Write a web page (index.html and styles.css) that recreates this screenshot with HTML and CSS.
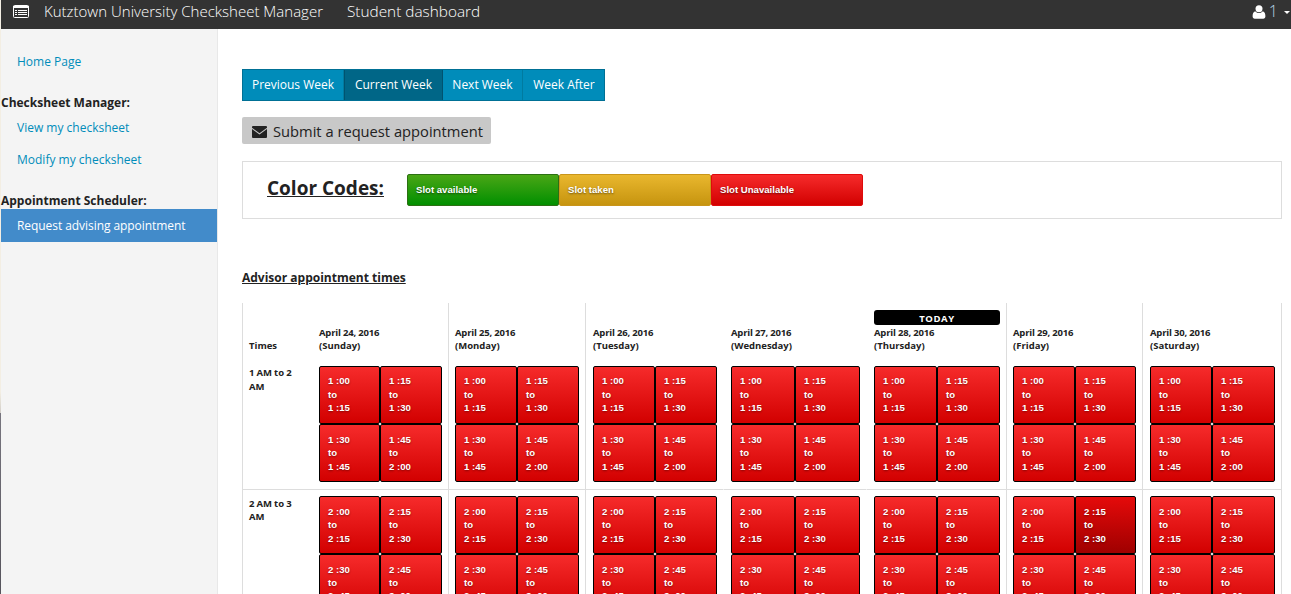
FILE: index.html
```html
<!DOCTYPE html>
<html lang="en">
<head>
<meta charset="utf-8">
<title>Student dashboard</title>
<link rel="stylesheet" href="styles.css">
</head>
<body>
<header class="topbar">
  <svg class="icon-list" width="16" height="13" viewBox="0 0 16 13"><rect x=".5" y=".5" width="15" height="12" rx="1" fill="none" stroke="#fff"/><path d="M0 1h16v2H0z" fill="#fff"/><path d="M2 5.500h2M5 5.500h9M2 7.500h2M5 7.500h9M2 9.500h2M5 9.500h9" stroke="#fff" stroke-width="1"/></svg>
  <span class="brand">Kutztown University Checksheet Manager</span>
  <span class="section">Student dashboard</span>
  <div class="user">
    <svg width="14" height="14" viewBox="0 0 14 14"><circle cx="7" cy="3.7" r="3.5" fill="#fff"/><path d="M3.2 6.2C4.9 8.6 9.100 8.600 10.800 6.200 12.700 6.700 13.400 8.800 13.400 11.200c0 1.600-.8 2.500-2.200 2.500H2.800C1.400 13.700.6 12.800.6 11.200.6 8.800 1.300 6.700 3.200 6.200z" fill="#fff"/></svg>
    <span class="count">1</span>
    <span class="caret"></span>
  </div>
</header>
<div class="page">
  <nav class="sidebar">
    <a class="link">Home Page</a>
    <h2 class="group">Checksheet Manager:</h2>
    <a class="link">View my checksheet</a>
    <a class="link">Modify my checksheet</a>
    <h2 class="group">Appointment Scheduler:</h2>
    <a class="link active">Request advising appointment</a>
  </nav>
  <main class="main">
    <div class="weeks">
      <button class="week w1">Previous Week</button><button class="week w2 current">Current Week</button><button class="week w3">Next Week</button><button class="week w4">Week After</button>
    </div>
    <button class="submit"><svg width="15" height="12" viewBox="0 0 15 12"><path d="M1 0h13q1 0 1 1v.7L7.500 7.200 0 1.700V1q0-1 1-1z" fill="#222"/><path d="M0 3l7.500 5.500L15 3v8q0 1-1 1H1q-1 0-1-1z" fill="#222"/></svg><span>Submit a request appointment</span></button>
    <section class="codes">
      <h1 class="codes-title">Color Codes:</h1>
      <div class="code green">Slot available</div><div class="code gold">Slot taken</div><div class="code red">Slot Unavailable</div>
    </section>
    <h2 class="heading">Advisor appointment times</h2>
    <div class="calendar" id="calendar"></div>
  </main>
</div>
<script src="app.js"></script>
</body>
</html>
```
FILE: styles.css
```css
* { box-sizing: border-box; }
body {
  margin: 0;
  height: 594px;
  padding-left: 1px;
  overflow: hidden;
  font-family: "Open Sans", sans-serif;
  color: #222;
  background: linear-gradient(#f3eee3 0 392px, #d2cec8 413px, #77757e 413px, #55535b 594px) 0 0 / 1px 594px no-repeat #fff;
}
h1, h2 { margin: 0; }
button { font: inherit; margin: 0; padding: 0; }
.topbar {
  display: flex;
  align-items: flex-start;
  height: 29px;
  background: #333;
  color: #fff;
  font-size: 15.35px;
  line-height: 22px;
  font-weight: 300;
  padding-left: 12px;
}
.icon-list { margin: 5px 15px 0 0; }
.brand { width: 279px; font-size: 15.02px; line-height: 23px; white-space: nowrap; }
.section { margin-left: 24px; line-height: 22px; }
.user { display: flex; margin-left: auto; }
.user svg { margin-top: 5px; }
.count { margin: 0 6px 0 3px; font-size: 16px; color: #b9d6e8; }
.caret { width: 6px; height: 3px; margin: 11px 1px 0 0; border: 3px solid transparent; border-top-color: #fff; border-bottom: 0; }
.page { display: flex; height: 565px; }
.sidebar { width: 217px; background: #f4f4f4; border-right: 1px solid #e8e8e8; padding-top: 16px; flex: none; }
.link { display: block; height: 32px; padding-left: 16px; font-size: 12px; line-height: 33px; color: #008cba; }
.group { font-size: 12px; line-height: 17px; }
.sidebar .group { margin-top: 17px; }
.sidebar .link.active { height: 33px; background: #428bca; color: #fff; letter-spacing: -.06px; }
.main { flex: 1; padding: 40px 9px 0 24px; min-width: 0; overflow: hidden; }
.weeks { display: flex; width: 363px; height: 32px; border: 1px solid #007095; }
.week { border: 0; border-right: 1px solid #007ba0; background: #008cba; color: #fff; font-size: 12px; white-space: nowrap; line-height: 30px; }
.w1 { width: 101px; }
.w2 { width: 99px; }
.w3 { width: 80px; }
.w4 { width: 81px; padding-left: 1px; border-right: 0; }
.week.current { background: #006687; border: 1px solid #005370; border-width: 0 1px; }
.submit { display: flex; align-items: center; width: 249px; height: 27px; margin-top: 16px; padding: 1px 0 0 10px; gap: 6px; border: 0; border-radius: 2px; background: #c8c8c8; color: #222; font-size: 14.7px; line-height: 24px; white-space: nowrap; }
.submit svg { margin-top: 2px; }
.codes { display: flex; height: 58px; margin-top: 17px; padding: 12px 0 0 24px; border: 1px solid #ddd; }
.codes-title { width: 140px; font-size: 19px; line-height: 28px; text-decoration: underline; text-decoration-thickness: 1px; white-space: nowrap; }
.code { width: 152px; height: 32px; padding-left: 8px; border: 1px solid; border-radius: 2px; font: bold 9.6px/30px "Liberation Sans", sans-serif; color: #fff; text-shadow: 0 1px 2px rgba(0, 0, 0, .5); }
.green { background: linear-gradient(#4aa616, #018f00); border-color: #2c7013; }
.gold { background: linear-gradient(#e9b72e, #c6940f); border-color: #c9951a; }
.red { background: linear-gradient(#f62b2b, #d20000); border-color: #df0b0b; }
.heading { margin-top: 50px; font-size: 12px; line-height: 17px; text-decoration: underline; }
.calendar {
  display: grid;
  grid-template-columns: 69px 137px 137px 138px 143px 140px 136px 139px;
  grid-template-rows: 56px 131px 131px;
  margin-top: 17px;
  border-left: 1px solid #ddd;
}
.cell { padding: 7px 6px 0 7px; border-right: 1px solid #ddd; border-bottom: 1px solid #ddd; }
.cell.tight { padding-left: 6px; }
.cell.open { border-right-color: transparent; }
.cell.head, .cell.time { font-size: 9.5px; font-weight: 700; line-height: 13px; }
.cell.head { padding-top: 23px; border-bottom: 0; white-space: nowrap; }
.date { letter-spacing: -.2px; }
.cell.time { border-right: 0; padding: 7px 6px 0; line-height: 13.5px; word-spacing: -.4px; }
.cell.corner { padding: 36px 0 0 6px; border-right: 0; }
.cell.today { padding-top: 7px; }
.badge { display: block; height: 15px; margin-bottom: 1px; border-radius: 3px; background: #000; color: #fff; text-align: center; letter-spacing: .6px; line-height: 18px; }
.slots { display: grid; grid-template-columns: 62px 1fr; grid-auto-rows: 58px; }
.day0 .slots { grid-template-columns: 61px 1fr; }
.day3 .slots { grid-template-columns: 64px 1fr; }
.day4 .slots { grid-template-columns: 63px 1fr; }
.slot { height: 58px; padding: 7px 0 0 8px; border: 1px solid #000; border-radius: 2px; background: linear-gradient(#f62b2b, #d20000); color: #fff; font: bold 9.6px/13.6px "Liberation Sans", sans-serif; text-shadow: 0 1px 2px rgba(0, 0, 0, .4); white-space: nowrap; }
.slot:nth-child(n+3), .second .slot { padding-top: 7.6px; }
.second .slot:nth-child(n+3) { padding-top: 8px; line-height: 13px; }
.slot.hover { background: linear-gradient(#e50a0a, #9f0000); }
.cell.second { padding-top: 6px; }
.cell.time.second { padding-top: 7px; line-height: 13px; }
```
FILE: app.js
```js
const days = ['Sunday', 'Monday', 'Tuesday', 'Wednesday', 'Thursday', 'Friday', 'Saturday'];
const calendar = document.getElementById('calendar');

function cellClass(i) {
  return `cell day${i}` + (i === 1 || i === 5 ? ' tight' : '') + (i === 2 || i === 3 ? ' open' : '');
}

let html = '<div class="cell head corner">Times</div>';
days.forEach((day, i) => {
  const today = i === 4;
  html += `<div class="${cellClass(i)} head${today ? ' today' : ''}">${today ? '<span class="badge">TODAY</span>' : ''}<span class="date">April ${24 + i}, 2016</span><br>(${day})</div>`;
});

[1, 2].forEach((hour) => {
  const second = hour === 2 ? ' second' : '';
  const marks = [`${hour} :00`, `${hour} :15`, `${hour} :30`, `${hour} :45`, `${hour + 1} :00`];
  html += `<div class="cell time${second}">${hour} AM to ${hour + 1} AM</div>`;
  days.forEach((day, i) => {
    html += `<div class="${cellClass(i)}${second}"><div class="slots">`;
    for (let q = 0; q < 4; q++) {
      const hover = hour === 2 && i === 5 && q === 1 ? ' hover' : '';
      html += `<div class="slot${hover}">${marks[q]}<br>to<br>${marks[q + 1]}</div>`;
    }
    html += '</div></div>';
  });
});
calendar.innerHTML = html;
```
